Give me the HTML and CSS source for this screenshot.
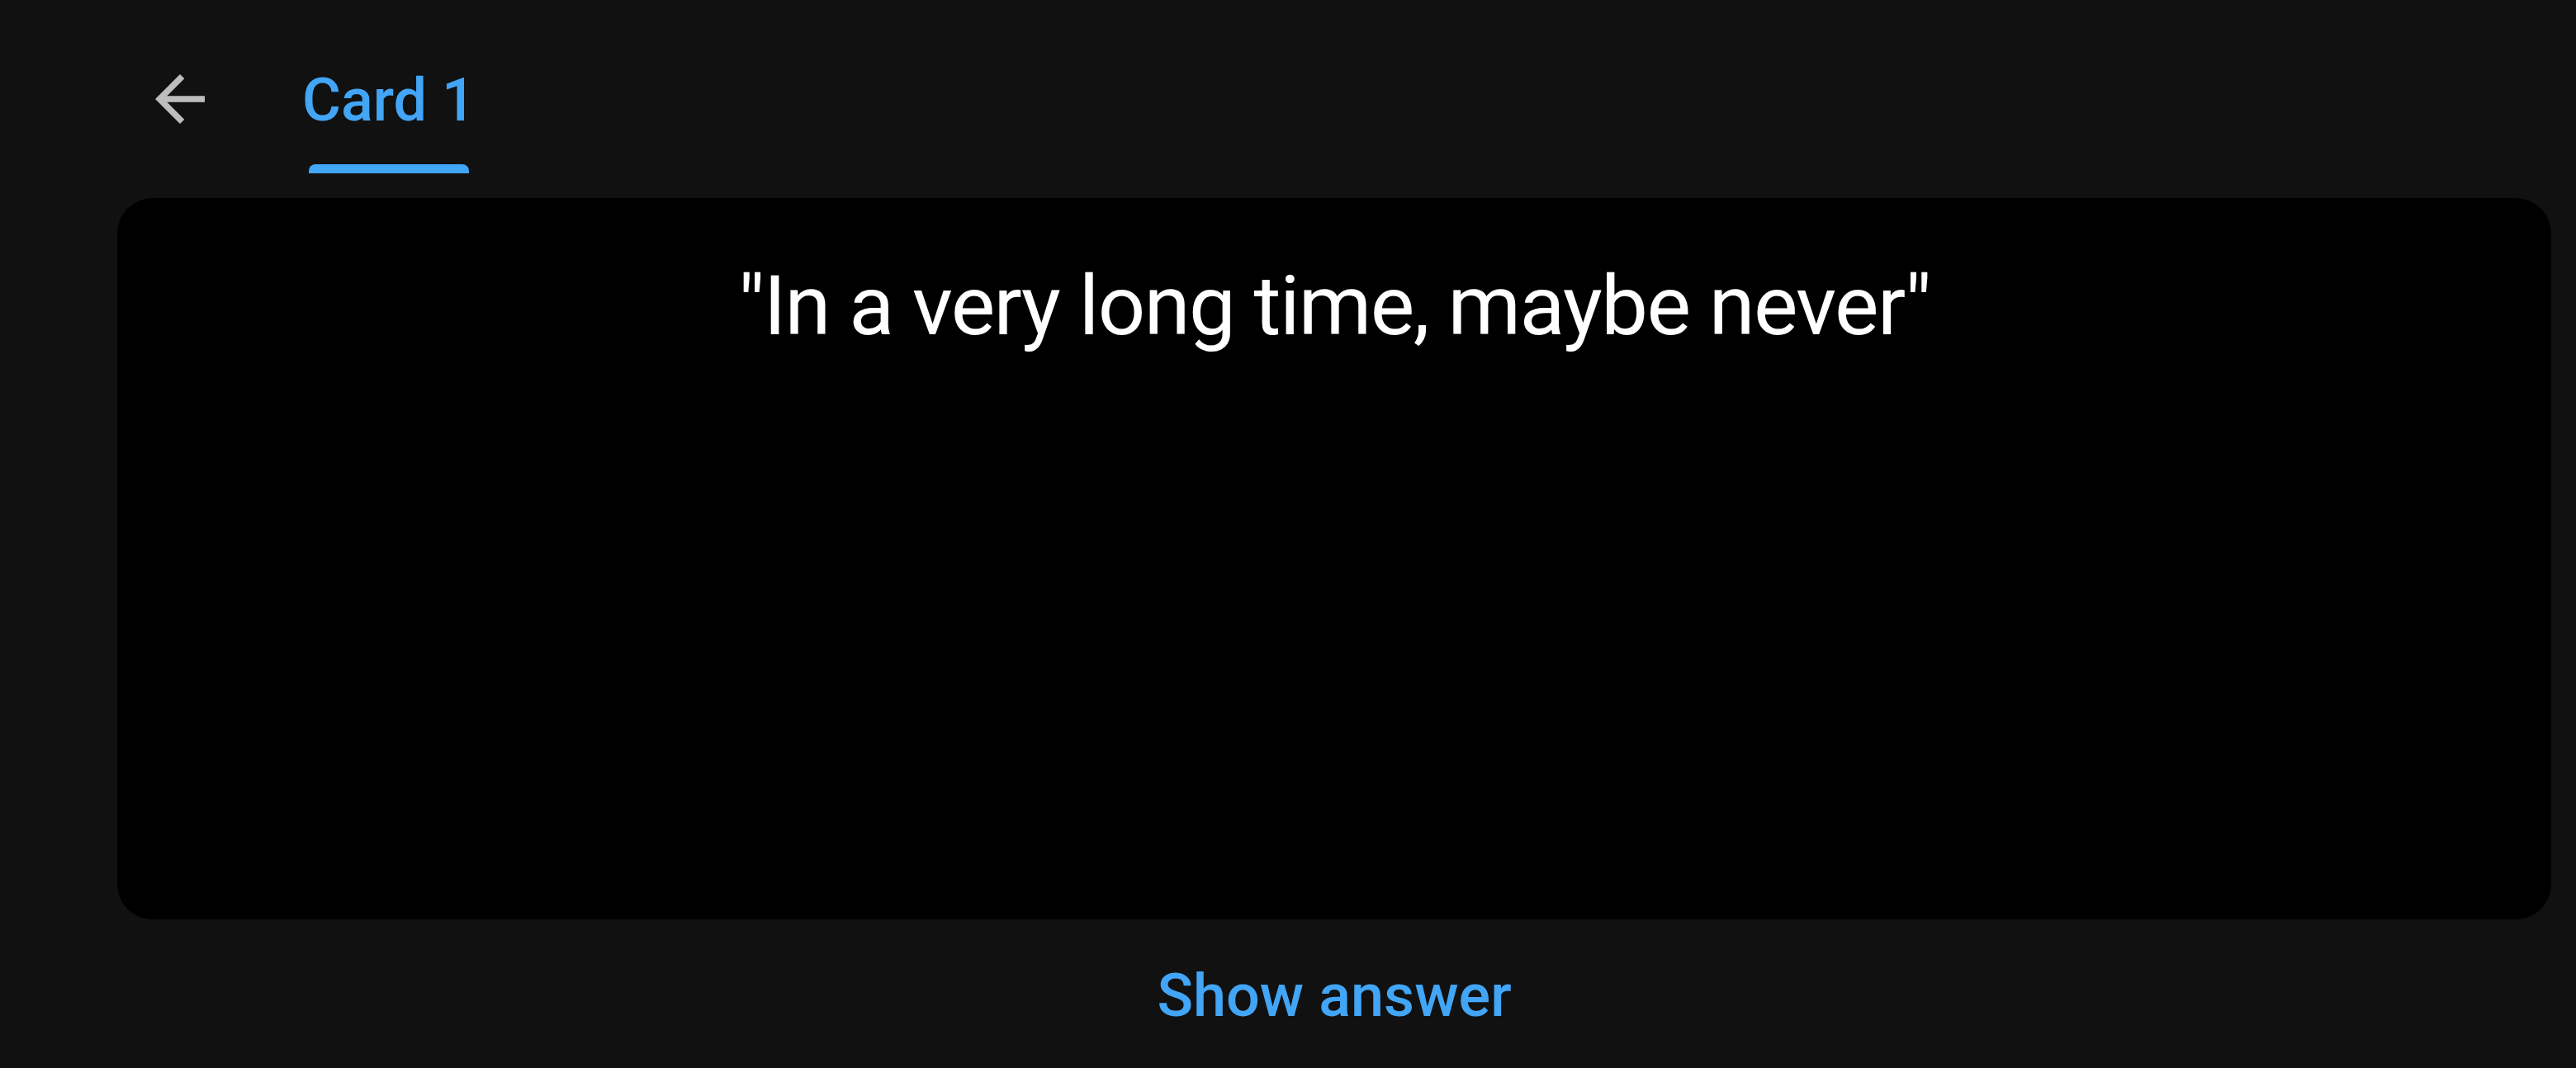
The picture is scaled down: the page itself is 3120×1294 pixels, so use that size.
FILE: index.html
```html
<!DOCTYPE html>
<html lang="en">
<head>
<meta charset="utf-8">
<title>Card 1</title>
<link rel="stylesheet" href="styles.css">
</head>
<body>
<div class="app">
  <header class="topbar">
    <button class="back" aria-label="Back">
      <svg viewBox="0 0 24 24" width="90" height="90"><path d="M20 11H7.83l5.59-5.59L12 4l-8 8 8 8 1.41-1.41L7.83 13H20v-2z" fill="currentColor"/></svg>
    </button>
    <div class="tab">
      <span class="tab-label">Card 1</span>
      <span class="tab-indicator"></span>
    </div>
  </header>
  <main class="card">
    <p class="quote">"In a very long time, maybe never"</p>
  </main>
  <div class="actions">
    <button class="text-btn">Show answer</button>
  </div>
</div>
</body>
</html>
```
FILE: styles.css
```css
html, body {
  margin: 0;
  padding: 0;
  background: #111111;
  height: 100%;
}
body {
  font-family: Roboto, "Noto Sans", sans-serif;
  color: #ffffff;
  overflow: hidden;
}
.app {
  display: flex;
  flex-direction: column;
  height: 1294px;
}
.topbar {
  display: flex;
  align-items: flex-start;
  padding: 75px 0 0 173px;
  height: 135px;
  box-sizing: content-box;
}
.back {
  width: 90px;
  height: 90px;
  padding: 0;
  border: 0;
  background: none;
  color: #bdbdbd;
  display: flex;
}
.tab {
  display: flex;
  flex-direction: column;
  margin-left: 103px;
  padding-top: 5px;
}
.tab-label {
  font-size: 72px;
  line-height: 84px;
  font-weight: 500;
  color: #42a5f5;
}
.tab-indicator {
  display: block;
  height: 11px;
  margin: 35px 8px 0 8px;
  background: #42a5f5;
  border-radius: 8px 8px 0 0;
}
.card {
  margin: 30px 30px 0 142px;
  height: 874px;
  background: #000000;
  border-radius: 43px;
  padding-top: 72px;
  box-sizing: border-box;
}
.quote {
  margin: 0;
  text-align: center;
  font-size: 101px;
  line-height: 118px;
  letter-spacing: -1.6px;
  font-weight: 400;
  color: #ffffff;
}
.actions {
  display: flex;
  justify-content: center;
  margin: 51px 30px 0 142px;
}
.text-btn {
  border: 0;
  background: none;
  padding: 0;
  font-family: Roboto, "Noto Sans", sans-serif;
  font-size: 72px;
  line-height: 84px;
  font-weight: 500;
  color: #42a5f5;
}
```
